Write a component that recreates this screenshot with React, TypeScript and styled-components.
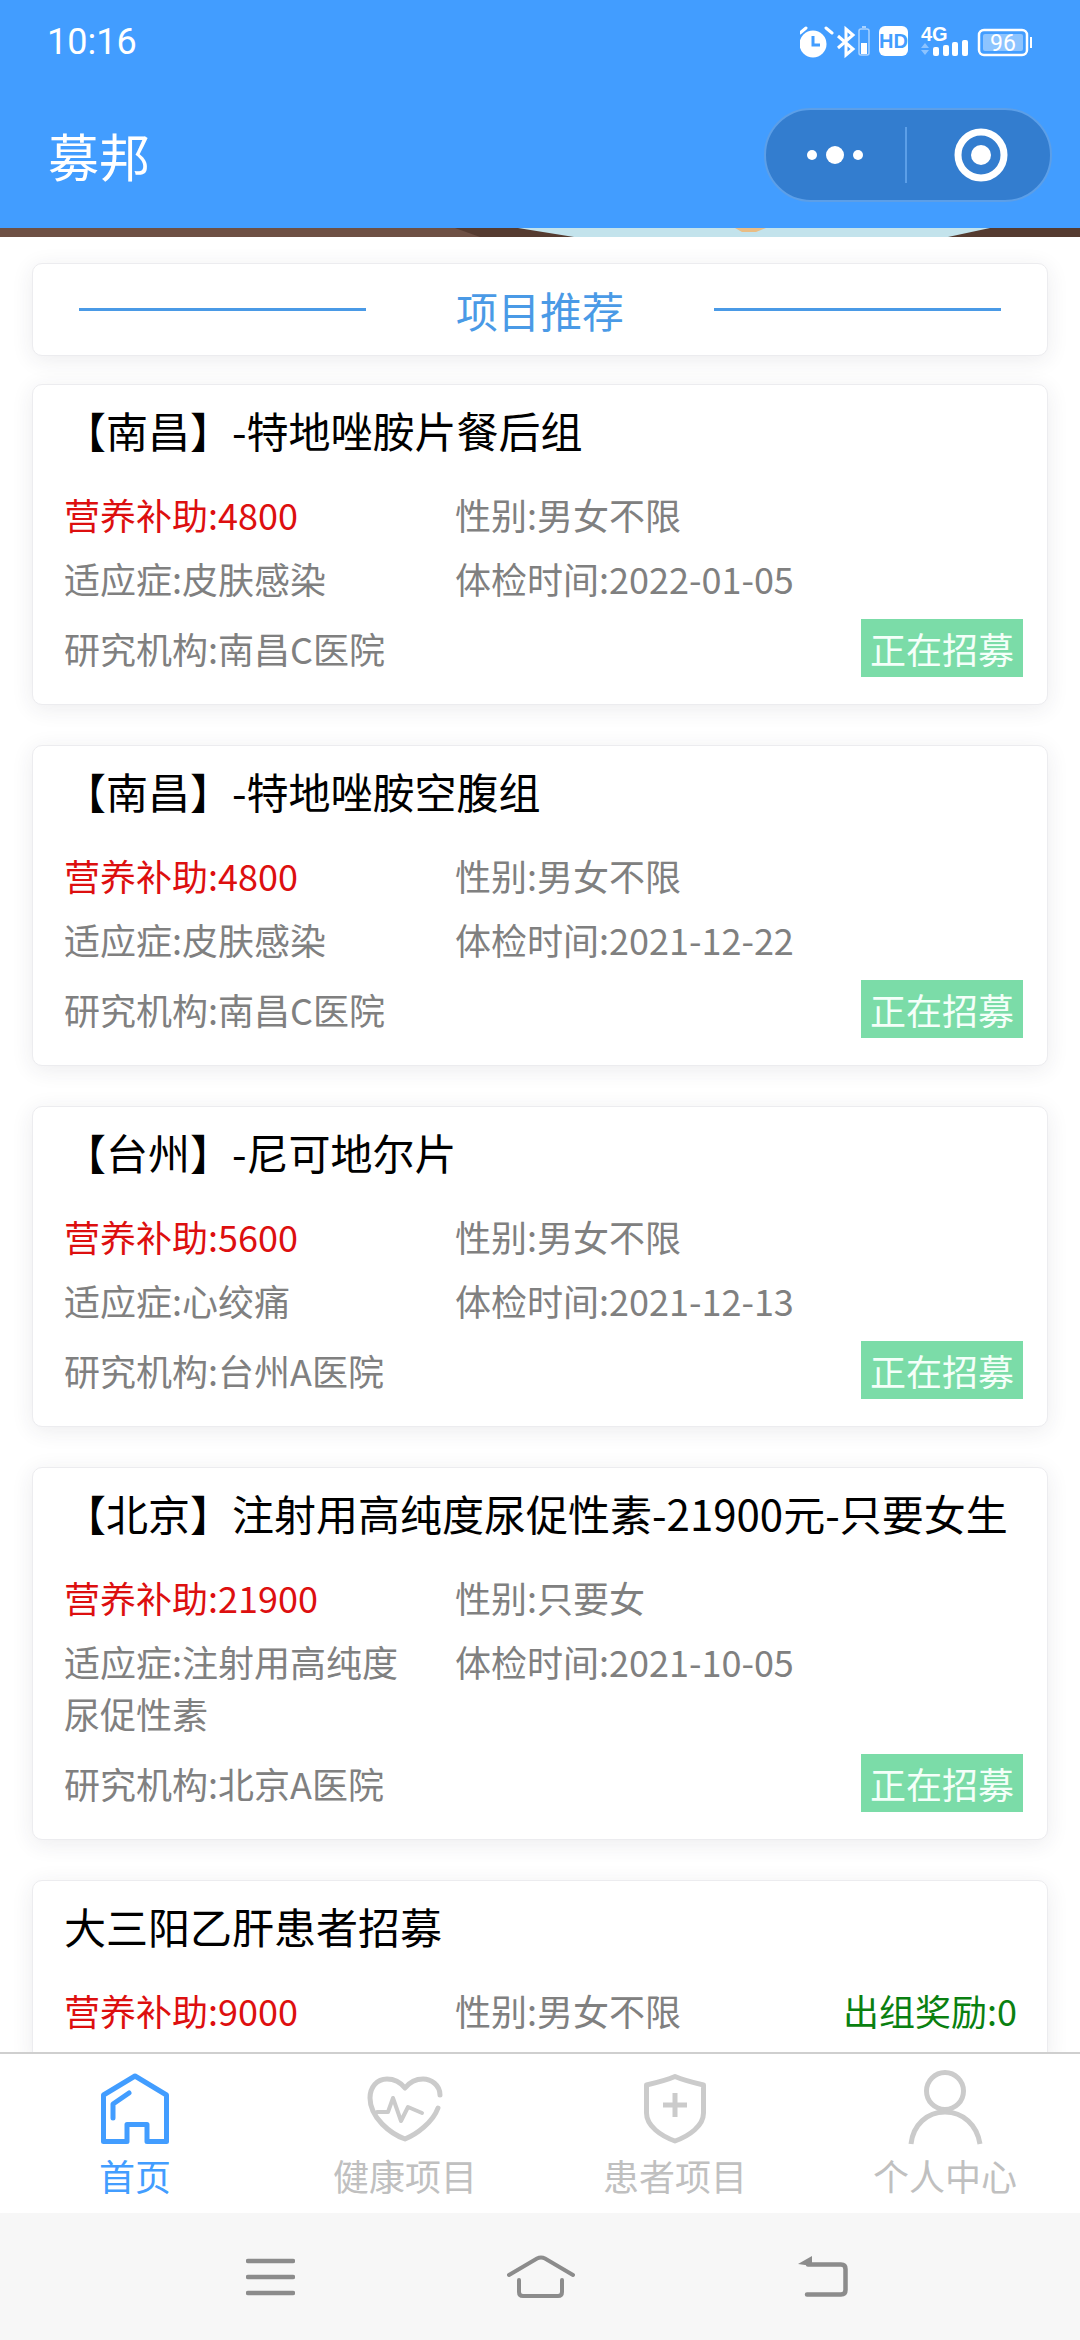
import React from 'react';
import styled, { createGlobalStyle } from 'styled-components';

type Project = {
	title: string;
	subsidy: string;
	gender: string;
	indication?: string;
	checkDate?: string;
	institute?: string;
	reward?: string;
};

const projects: Project[] = [
	{
		title: '【南昌】-特地唑胺片餐后组',
		subsidy: '4800',
		gender: '男女不限',
		indication: '皮肤感染',
		checkDate: '2022-01-05',
		institute: '南昌C医院',
	},
	{
		title: '【南昌】-特地唑胺空腹组',
		subsidy: '4800',
		gender: '男女不限',
		indication: '皮肤感染',
		checkDate: '2021-12-22',
		institute: '南昌C医院',
	},
	{
		title: '【台州】-尼可地尔片',
		subsidy: '5600',
		gender: '男女不限',
		indication: '心绞痛',
		checkDate: '2021-12-13',
		institute: '台州A医院',
	},
	{
		title: '【北京】注射用高纯度尿促性素-21900元-只要女生',
		subsidy: '21900',
		gender: '只要女',
		indication: '注射用高纯度尿促性素',
		checkDate: '2021-10-05',
		institute: '北京A医院',
	},
	{
		// the rest of this card is behind the tab bar
		title: '大三阳乙肝患者招募',
		subsidy: '9000',
		gender: '男女不限',
		reward: '0',
	},
];

function StatusIcons() {
	return (
		<svg width='240' height='44' viewBox='800 20 240 44'>
			<path d='M800 34l6-5M826 29l6 5' stroke='#fff' strokeWidth='3' strokeLinecap='round' />
			<circle cx='813' cy='45' r='13.5' fill='#fff' />
			<path d='M813 37v9h7' stroke='#429dff' strokeWidth='3' fill='none' />
			<path d='M838 37l15 13-7 6V30l7 6-15 13' stroke='#fff' strokeWidth='3' fill='none' />
			<rect x='859' y='30' width='10' height='26' rx='2' stroke='#a9d2ff' strokeWidth='1.5' fill='none' />
			<rect x='862' y='27' width='4' height='2' fill='#a9d2ff' />
			<rect x='861' y='44' width='6' height='11' fill='#fff' />
			<rect x='879' y='27' width='29' height='30' rx='6' fill='#fff' />
			<text x='893.5' y='49' fontSize='20' fontWeight='700' fontFamily='Liberation Sans' textAnchor='middle' fill='#429dff'>
				HD
			</text>
			<text x='921' y='42' fontSize='20' fontWeight='700' fontFamily='Liberation Sans' fill='#fff'>
				4G
			</text>
			<path d='M921 49l4-5 4 5zM921 51l4 5 4-5z' fill='#8cc3ff' />
			<rect x='933' y='48' width='6' height='9' rx='2' fill='#fff' />
			<rect x='943' y='46' width='6' height='11' rx='2' fill='#fff' />
			<rect x='952' y='43' width='6' height='14' rx='2' fill='#fff' />
			<rect x='962' y='41' width='6' height='16' rx='2' fill='#fff' />
			<rect x='979' y='31' width='48' height='25' rx='5' stroke='#fff' strokeWidth='2.5' fill='none' />
			<rect x='983' y='35' width='40' height='17' rx='2' fill='#fff' fillOpacity='0.4' />
			<rect x='1030' y='38' width='2' height='11' fill='#fff' />
			<text x='1003' y='52' fontSize='23' fontFamily='Roboto' textAnchor='middle' fill='#fff'>
				96
			</text>
		</svg>
	);
}

function BannerStrip() {
	return (
		<svg width='1080' height='9' viewBox='0 0 1080 9' display='block'>
			<rect width='1080' height='9' fill='#6e5044' />
			<path d='M455 0H1080V9H480z' fill='#553b30' />
			<path d='M518 0H990L948 9H574z' fill='#c3e3ec' />
			<path d='M735 0H766L756 4H742z' fill='#e9bd85' />
		</svg>
	);
}

function MoreDots() {
	return (
		<svg width='66' height='18' viewBox='0 0 66 18'>
			<circle cx='10' cy='9' r='5' fill='#fff' />
			<circle cx='33' cy='9' r='9' fill='#fff' />
			<circle cx='56' cy='9' r='5' fill='#fff' />
		</svg>
	);
}

function CloseRing() {
	return (
		<svg width='54' height='54' viewBox='0 0 54 54'>
			<circle cx='27' cy='27' r='23' stroke='#fff' strokeWidth='7' fill='none' />
			<circle cx='27' cy='27' r='10' fill='#fff' />
		</svg>
	);
}

function HomeIcon() {
	return (
		<svg width='80' height='80' viewBox='0 0 80 80' fill='none' stroke='#429dff' strokeWidth='5' strokeLinejoin='round'>
			<path d='M40 8l31.500 19v46.500H52V56.500H32v17H8.500V27z' />
			<path d='M18 50V36l16-11' strokeLinecap='round' />
		</svg>
	);
}

function HeartIcon() {
	return (
		<svg width='80' height='80' viewBox='0 0 80 80' fill='none' stroke='#cbcbcb' strokeWidth='5' strokeLinecap='round' strokeLinejoin='round'>
			<path d='M75 27C75 17 66 11 58 11 50 11 44 15 40 20 36 15 30 11 22 11 12 11 5 19 5 30 5 50 26 66 40 71 52 66 68 54 73 40' />
			<path d='M12 44h11l5-14 8 23 7-14 14 6' strokeWidth='4' />
		</svg>
	);
}

function ShieldIcon() {
	return (
		<svg width='80' height='80' viewBox='0 0 80 80' fill='none' stroke='#cbcbcb' strokeWidth='5' strokeLinejoin='round'>
			<path d='M40 8.500C48 12 60 15 68.500 17V45C68.500 58 54 68 40 73 26 68 11.500 58 11.500 45V17C20 15 32 12 40 8.500z' />
			<path d='M28 37h24M40 25v24' />
		</svg>
	);
}

function UserIcon() {
	return (
		<svg width='80' height='80' viewBox='0 0 80 80' fill='none' stroke='#cbcbcb' strokeWidth='5'>
			<circle cx='40' cy='23' r='18.500' />
			<path d='M6 76C8 57 22 44 40 44 58 44 72 57 75 76' />
		</svg>
	);
}

function MenuGlyph() {
	return (
		<svg width='49' height='38' viewBox='0 0 49 38' stroke='#8c8c8c' strokeWidth='4.500' strokeLinecap='round'>
			<path d='M2 3h45M2 19h45M2 35h45' />
		</svg>
	);
}

function HomeGlyph() {
	return (
		<svg width='79' height='43' viewBox='0 0 79 43' fill='none' stroke='#8c8c8c' strokeWidth='4' strokeLinecap='round'>
			<path d='M2 20L30 3.500Q34 1.500 38 3.500L66 20' />
			<path d='M12 25V37Q12 41 16 41H51Q55 41 55 37V25' />
		</svg>
	);
}

function BackGlyph() {
	return (
		<svg width='50' height='42' viewBox='0 0 50 42' fill='none' stroke='#8c8c8c' strokeWidth='4.500' strokeLinecap='round'>
			<path d='M0 8L14 0V10z' fill='#8c8c8c' stroke='none' />
			<path d='M10 8.500H43Q47.500 8.500 47.500 13V34Q47.500 38.500 43 38.500H9' />
		</svg>
	);
}

function ProjectCard({ project }: { project: Project }) {
	return (
		<Card>
			<CardTitle>{project.title}</CardTitle>
			<InfoRows>
				<InfoRow>
					<LeftCell $tone='red'>营养补助:{project.subsidy}</LeftCell>
					<RightCell>性别:{project.gender}</RightCell>
					{project.reward && <Reward>出组奖励:{project.reward}</Reward>}
				</InfoRow>
				{project.indication && (
					<InfoRow>
						<LeftCell>适应症:{project.indication}</LeftCell>
						<RightCell>体检时间:{project.checkDate}</RightCell>
					</InfoRow>
				)}
				{project.institute && (
					<InstituteRow>
						<span>研究机构:{project.institute}</span>
						<StatusBadge>正在招募</StatusBadge>
					</InstituteRow>
				)}
			</InfoRows>
		</Card>
	);
}

export default function App() {
	return (
		<>
			<GlobalStyle />
			<Screen>
				<Header>
					<StatusBar>
						<Clock>10:16</Clock>
						<StatusIcons />
					</StatusBar>
					<TitleBar>
						<PageTitle>募邦</PageTitle>
						<Capsule>
							<CapsuleSide>
								<MoreDots />
							</CapsuleSide>
							<CapsuleDivider />
							<CapsuleSide>
								<CloseRing />
							</CapsuleSide>
						</Capsule>
					</TitleBar>
				</Header>
				<BannerStrip />
				<Content>
					<SectionCard>
						<SectionLine />
						<SectionTitle>项目推荐</SectionTitle>
						<SectionLine />
					</SectionCard>
					{projects.map((project) => (
						<ProjectCard key={project.title} project={project} />
					))}
				</Content>
				<TabBar>
					<TabItem $active>
						<HomeIcon />
						<span>首页</span>
					</TabItem>
					<TabItem>
						<HeartIcon />
						<span>健康项目</span>
					</TabItem>
					<TabItem>
						<ShieldIcon />
						<span>患者项目</span>
					</TabItem>
					<TabItem>
						<UserIcon />
						<span>个人中心</span>
					</TabItem>
				</TabBar>
				<SystemNav>
					<MenuGlyph />
					<HomeGlyph />
					<BackGlyph />
				</SystemNav>
			</Screen>
		</>
	);
}

const GlobalStyle = createGlobalStyle`
	html, body {
		margin: 0;
		padding: 0;
		background: #fff;
	}

	* {
		box-sizing: border-box;
	}
`;

const Screen = styled.div`
	width: 1080px;
	height: 2340px;
	display: flex;
	flex-direction: column;
	overflow: hidden;
	background: #fff;
	font-family: 'Noto Sans CJK SC', 'Noto Sans', sans-serif;
`;

const Header = styled.header`
	height: 228px;
	flex-shrink: 0;
	background: #429dff;
	color: #fff;
`;

const StatusBar = styled.div`
	height: 82px;
	padding: 0 40px 0 47px;
	display: flex;
	align-items: center;
	justify-content: space-between;
`;

const Clock = styled.span`
	font-family: Roboto, sans-serif;
	font-size: 36px;
	line-height: 44px;
	padding-top: 2px;
`;

const TitleBar = styled.div`
	height: 146px;
	padding: 26px 28px 26px 48px;
	display: flex;
	align-items: center;
	justify-content: space-between;
`;

const PageTitle = styled.h1`
	margin: 0;
	font-size: 51px;
	font-weight: 400;
`;

const Capsule = styled.div`
	width: 288px;
	height: 94px;
	display: flex;
	align-items: center;
	background: #337dcf;
	border: 2px solid #5c9fe8;
	border-radius: 47px;
`;

const CapsuleSide = styled.div`
	flex: 1;
	display: flex;
	align-items: center;
	justify-content: center;

	&:last-child {
		padding-left: 5px;
	}
`;

const CapsuleDivider = styled.div`
	width: 2px;
	height: 56px;
	background: #5c9fe8;
`;

const Content = styled.main`
	flex: 1;
	min-height: 0;
	padding: 26px 32px 0;
	display: flex;
	flex-direction: column;
	gap: 40px;
	overflow: hidden;
`;

const panel = `
	background: #fff;
	border: 1px solid #ececef;
	border-radius: 10px;
	box-shadow: 0 4px 22px rgba(40, 40, 70, 0.09);
`;

const SectionCard = styled.section`
	${panel}
	height: 93px;
	flex-shrink: 0;
	margin-bottom: -12px;
	padding: 0 46px;
	display: flex;
	align-items: center;
`;

const SectionLine = styled.div`
	flex: 1;
	height: 3px;
	background: #4a9ae6;
`;

const SectionTitle = styled.h2`
	width: 348px;
	margin: 0;
	text-align: center;
	color: #4a9ae6;
	font-size: 42px;
	font-weight: 400;
`;

const Card = styled.article`
	${panel}
	flex-shrink: 0;
	padding: 16px 24px 27px 31px;
`;

const CardTitle = styled.h3`
	margin: 0;
	color: #000;
	font-size: 42px;
	line-height: 58px;
	font-weight: 400;
	white-space: nowrap;
`;

const InfoRows = styled.div`
	margin-top: 29px;
	display: flex;
	flex-direction: column;
	gap: 12px;
	color: #808080;
	font-size: 36px;
	line-height: 52px;
`;

const InfoRow = styled.div`
	display: flex;
`;

const LeftCell = styled.div<{ $tone?: 'red' }>`
	width: 391px;
	flex-shrink: 0;
	padding-right: 26px;
	color: ${({ $tone }) => ($tone === 'red' ? '#dd0f0f' : 'inherit')};
`;

const RightCell = styled.div`
	white-space: nowrap;
`;

const Reward = styled.div`
	margin-left: auto;
	padding-right: 6px;
	color: #0a8010;
`;

const InstituteRow = styled.div`
	margin-top: 3px;
	display: flex;
	align-items: center;
	justify-content: space-between;
`;

const StatusBadge = styled.span`
	width: 162px;
	height: 58px;
	display: flex;
	align-items: center;
	justify-content: center;
	background: #7bdca8;
	color: #f4fff9;
`;

const TabBar = styled.nav`
	height: 161px;
	flex-shrink: 0;
	padding-top: 14px;
	display: grid;
	grid-template-columns: repeat(4, 1fr);
	background: #fff;
	border-top: 2px solid #cfcfcf;
	position: relative;
`;

const TabItem = styled.div<{ $active?: boolean }>`
	display: flex;
	flex-direction: column;
	align-items: center;
	color: ${({ $active }) => ($active ? '#429dff' : '#c0c0c0')};
	font-size: 36px;
	line-height: 54px;

	svg {
		display: block;
	}
`;

const SystemNav = styled.div`
	height: 127px;
	flex-shrink: 0;
	padding-left: 246px;
	display: flex;
	align-items: center;
	gap: 212px;
	background: #f7f7f7;
`;
